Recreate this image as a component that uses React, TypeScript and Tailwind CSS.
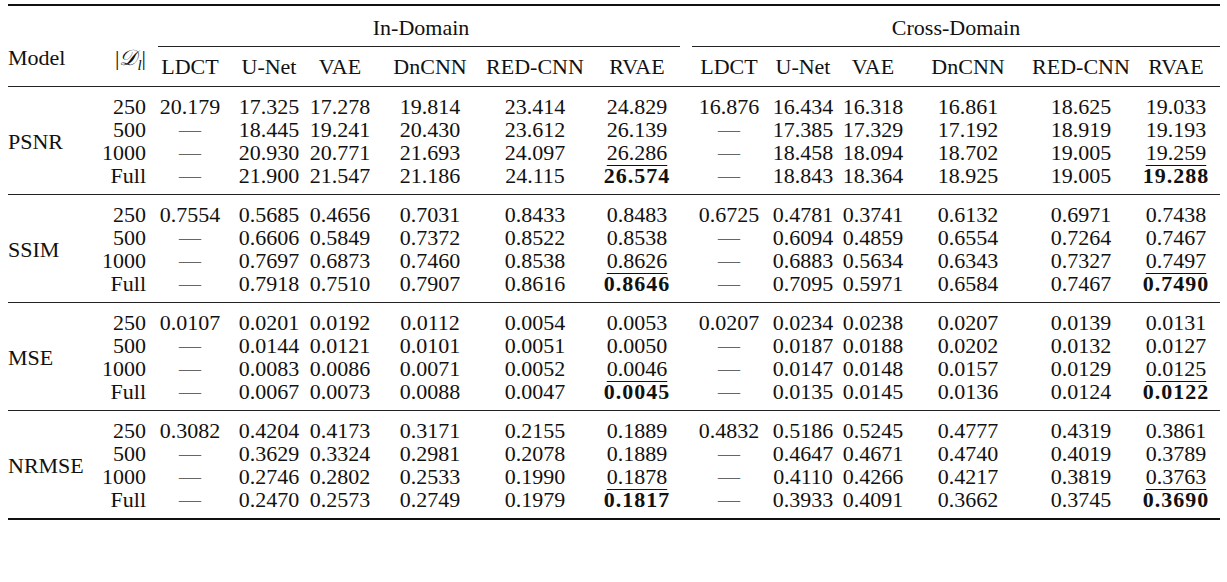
const colWidths = [
  "w-[80px]",
  "w-[78px]",
  "w-[64px]",
  "w-[116px]",
  "w-[94px]",
  "w-[110px]",
  "w-[74px]",
  "w-[74px]",
  "w-[66px]",
  "w-[124px]",
  "w-[102px]",
  "w-[88px]",
];

const methods = ["LDCT", "U-Net", "VAE", "DnCNN", "RED-CNN", "RVAE"];
const sizes = ["250", "500", "1000", "Full"];

// "-" = dash, "_x" = underlined (second best), "*x" = bold (best)
const sections: { metric: string; rows: string[][] }[] = [
  {
    metric: "PSNR",
    rows: [
      ["20.179", "17.325", "17.278", "19.814", "23.414", "24.829", "16.876", "16.434", "16.318", "16.861", "18.625", "19.033"],
      ["-", "18.445", "19.241", "20.430", "23.612", "26.139", "-", "17.385", "17.329", "17.192", "18.919", "19.193"],
      ["-", "20.930", "20.771", "21.693", "24.097", "_26.286", "-", "18.458", "18.094", "18.702", "19.005", "_19.259"],
      ["-", "21.900", "21.547", "21.186", "24.115", "*26.574", "-", "18.843", "18.364", "18.925", "19.005", "*19.288"],
    ],
  },
  {
    metric: "SSIM",
    rows: [
      ["0.7554", "0.5685", "0.4656", "0.7031", "0.8433", "0.8483", "0.6725", "0.4781", "0.3741", "0.6132", "0.6971", "0.7438"],
      ["-", "0.6606", "0.5849", "0.7372", "0.8522", "0.8538", "-", "0.6094", "0.4859", "0.6554", "0.7264", "0.7467"],
      ["-", "0.7697", "0.6873", "0.7460", "0.8538", "_0.8626", "-", "0.6883", "0.5634", "0.6343", "0.7327", "_0.7497"],
      ["-", "0.7918", "0.7510", "0.7907", "0.8616", "*0.8646", "-", "0.7095", "0.5971", "0.6584", "0.7467", "*0.7490"],
    ],
  },
  {
    metric: "MSE",
    rows: [
      ["0.0107", "0.0201", "0.0192", "0.0112", "0.0054", "0.0053", "0.0207", "0.0234", "0.0238", "0.0207", "0.0139", "0.0131"],
      ["-", "0.0144", "0.0121", "0.0101", "0.0051", "0.0050", "-", "0.0187", "0.0188", "0.0202", "0.0132", "0.0127"],
      ["-", "0.0083", "0.0086", "0.0071", "0.0052", "_0.0046", "-", "0.0147", "0.0148", "0.0157", "0.0129", "_0.0125"],
      ["-", "0.0067", "0.0073", "0.0088", "0.0047", "*0.0045", "-", "0.0135", "0.0145", "0.0136", "0.0124", "*0.0122"],
    ],
  },
  {
    metric: "NRMSE",
    rows: [
      ["0.3082", "0.4204", "0.4173", "0.3171", "0.2155", "0.1889", "0.4832", "0.5186", "0.5245", "0.4777", "0.4319", "0.3861"],
      ["-", "0.3629", "0.3324", "0.2981", "0.2078", "0.1889", "-", "0.4647", "0.4671", "0.4740", "0.4019", "0.3789"],
      ["-", "0.2746", "0.2802", "0.2533", "0.1990", "_0.1878", "-", "0.4110", "0.4266", "0.4217", "0.3819", "_0.3763"],
      ["-", "0.2470", "0.2573", "0.2749", "0.1979", "*0.1817", "-", "0.3933", "0.4091", "0.3662", "0.3745", "*0.3690"],
    ],
  },
];

function Value({ v }: { v: string }) {
  if (v === "-") return <span className="text-[#666]">—</span>;
  if (v.startsWith("_"))
    return (
      <span className="underline decoration-1 underline-offset-[5px]">
        {v.slice(1)}
      </span>
    );
  if (v.startsWith("*"))
    return <span className="font-bold tracking-[1px]">{v.slice(1)}</span>;
  return <span>{v}</span>;
}

function Group({
  title,
  offset,
  ruleClass,
}: {
  title: string;
  offset: number;
  ruleClass: string;
}) {
  return (
    <div className="flex flex-col">
      <div className="h-[40px] pt-[2px] flex items-center justify-center">
        {title}
      </div>
      <div className={`h-px bg-[#222] ${ruleClass}`} />
      <div className="h-[39px] flex items-center">
        {methods.map((m, i) => (
          <div
            key={m}
            className={`${colWidths[offset + i]} flex justify-center whitespace-nowrap`}
          >
            {m}
          </div>
        ))}
      </div>
    </div>
  );
}

export default function App() {
  return (
    <div className="min-h-screen bg-white text-[#111] [font-family:'Liberation_Serif','Times_New_Roman',serif] text-[22px] leading-[23px] pt-[4px]">
      <div className="ml-[8px] w-[1212px]">
        <div className="h-[2px] bg-[#111]" />

        <div className="flex h-[80px]">
          <div className="w-[90px] flex items-end pb-[17px]">Model</div>
          <div className="w-[52px] flex items-end justify-end pr-[4px] pb-[17px] whitespace-nowrap">
            |<span className="italic">𝒟</span>
            <sub className="italic text-[15px] leading-none">l</sub>|
          </div>
          <Group title="In-Domain" offset={0} ruleClass="ml-[8px] mr-[12px]" />
          <Group title="Cross-Domain" offset={6} ruleClass="ml-[0px]" />
        </div>

        <div className="h-px bg-[#222]" />

        {sections.map((s, si) => (
          <div key={s.metric}>
            <div className="flex pt-[8px] pb-[7px]">
              <div className="w-[90px] flex items-center">{s.metric}</div>
              <div className="flex flex-col">
                {s.rows.map((row, ri) => (
                  <div key={ri} className="flex h-[23px] items-center">
                    <div className="w-[52px] flex justify-end pr-[4px]">
                      {sizes[ri]}
                    </div>
                    {row.map((v, ci) => (
                      <div
                        key={ci}
                        className={`${colWidths[ci]} flex justify-center whitespace-nowrap`}
                      >
                        <Value v={v} />
                      </div>
                    ))}
                  </div>
                ))}
              </div>
            </div>
            {si < sections.length - 1 ? (
              <div className="h-px bg-[#222]" />
            ) : (
              <div className="h-[2px] bg-[#111]" />
            )}
          </div>
        ))}
      </div>
    </div>
  );
}
